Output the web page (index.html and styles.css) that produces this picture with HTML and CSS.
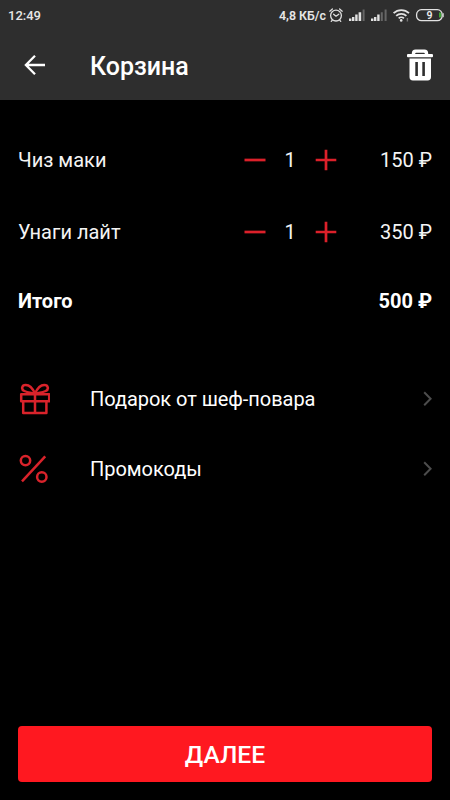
FILE: index.html
```html
<!DOCTYPE html>
<html lang="ru">
<head>
<meta charset="utf-8">
<title>Корзина</title>
<link rel="stylesheet" href="styles.css">
</head>
<body>
<div class="app">
  <div class="status">
    <span class="clock">12:49</span>
    <span class="speed">4,8 КБ/с</span>
    <svg class="status-icons" width="124" height="30" viewBox="326 0 124 30">
      <g fill="none" stroke="#dedede" stroke-width="1.3" stroke-linecap="round" stroke-linejoin="round">
        <circle cx="336" cy="15.6" r="5.4"/>
        <path d="M333.6 14.2l2.4 2 2.8-2M329.8 11.2l2.6-2.2M342.2 11.2l-2.6-2.2M332.3 20.2l-1 1.2M339.7 20.2l1 1.2"/>
      </g>
      <g fill="#e2e2e2">
        <path d="M349 18.6h2.4V21H349zM352 17h2.4v4H352zM355.200 14.6h2.4V21h-2.4zM358.600 12.200h2.600V21h-2.600z"/>
        <path d="M371 18.6h2.4V21H371zM374 17h2.4v4H374zM377.2 14.6h2.4V21h-2.4z"/>
      </g>
      <path fill="#666" d="M362.600 9.400h2V21h-2zM380.800 12.200h2V21h-2zM384.600 9.400h2V21h-2z"/>
      <g fill="none" stroke="#e2e2e2" stroke-width="1.8">
        <path d="M393.600 13.200a11 11 0 0 1 15.400 0M396.200 15.900a7.200 7.200 0 0 1 10.200 0M398.700 18.400a3.700 3.700 0 0 1 5.200 0"/>
      </g>
      <circle cx="401.2" cy="20.4" r="1.3" fill="#e2e2e2"/>
      <path d="M407.4 18v3.5" stroke="#777" stroke-width="1.4"/>
      <path d="M439 12.4h2q1.400 2.600 0 5.200h-2z" fill="#3fa535"/>
      <rect x="416.6" y="9.700" width="25.6" height="11" rx="4.8" fill="none" stroke="#e2e2e2" stroke-width="1.3"/>
      <path d="M443.3 13.2v4" stroke="#cfcfcf"/>
      <text class="battery-level" x="429.4" y="19" text-anchor="middle">9</text>
    </svg>
  </div>
  <header class="header">
    <svg class="back" width="24" height="24" viewBox="0 0 24 24"><path d="M22 12H3.2M12 2.8L2.9 12l9.1 9.2" fill="none" stroke="#fff" stroke-width="2.3"/></svg>
    <h1 class="title">Корзина</h1>
    <svg class="trash" width="28" height="34" viewBox="406 48 28 34">
      <path fill="#fff" fill-rule="evenodd" d="M411.8 54v-.6a3.8 3.8 0 0 1 3.8-3.8h8.8a3.8 3.8 0 0 1 3.8 3.8v.6h3.800q1 0 1 1v1.300q0 1-1 1h-24q-1 0-1-1V55q0-1 1-1zM415.2 54h9.6v-.2q0-1-1-1h-7.6q-1 0-1 1z"/>
      <path fill="#fff" fill-rule="evenodd" d="M409.500 58.500h21.500V77.100q0 3.400-3.400 3.400h-14.700q-3.400 0-3.400-3.400zM415.300 62v14h2.600V62zM422.300 62v14h2.600V62z"/>
    </svg>
  </header>
  <main class="main">
    <div class="item">
      <span class="name">Чиз маки</span>
      <svg class="step" width="22" height="22" viewBox="0 0 22 22"><path d="M.5 11h21"/></svg>
      <span class="qty">1</span>
      <svg class="step" width="22" height="22" viewBox="0 0 22 22"><path d="M.7 11h20.600M11 .7v20.600"/></svg>
      <span class="price">150 ₽</span>
    </div>
    <div class="item">
      <span class="name">Унаги лайт</span>
      <svg class="step" width="22" height="22" viewBox="0 0 22 22"><path d="M.5 11h21"/></svg>
      <span class="qty">1</span>
      <svg class="step" width="22" height="22" viewBox="0 0 22 22"><path d="M.7 11h20.600M11 .7v20.600"/></svg>
      <span class="price">350 ₽</span>
    </div>
    <div class="total"><span>Итого</span><span>500 ₽</span></div>
    <div class="links">
      <div class="link">
        <svg class="link-icon" width="32" height="34" viewBox="18 382 32 34"><path d="M21.200 394.300h28v6.900h-28zM23.200 401.200v11.900h23.200v-11.900M35 394.300v18.800M35 393.600c-2-4.500-5.200-8.600-9.200-8.600-4.300 0-4.800 4.400-1.500 6 3 1.500 6.700 1.700 10.700 2.600 4-.9 7.700-1.100 10.700-2.600 3.300-1.600 2.800-6-1.500-6-4 0-7.200 4.100-9.200 8.600z"/></svg>
        <span class="label">Подарок от шеф-повара</span>
        <svg class="chevron" width="10" height="16" viewBox="0 0 10 16"><path d="M2.200 1.200L8.600 7.700l-6.400 6.500"/></svg>
      </div>
      <div class="link">
        <svg class="link-icon" width="32" height="34" viewBox="18 452 32 34"><circle cx="25.500" cy="460.600" r="4.700"/><circle cx="41.800" cy="477" r="4.700"/><path d="M45.200 456.300L22 481.300"/></svg>
        <span class="label">Промокоды</span>
        <svg class="chevron" width="10" height="16" viewBox="0 0 10 16"><path d="M2.200 1.200L8.600 7.700l-6.400 6.500"/></svg>
      </div>
    </div>
  </main>
  <button class="next">ДАЛЕЕ</button>
</div>
</body>
</html>
```
FILE: styles.css
```css
* { box-sizing: border-box; }
body { margin: 0; background: #000; color: #fff; font-family: Roboto, "Liberation Sans", sans-serif; }
.app { width: 450px; height: 800px; display: flex; flex-direction: column; background: #000; }
svg { display: block; flex: none; }
.status { height: 30px; display: flex; align-items: center; padding-left: 8px; background: #2e2e2e; color: #e6e6e6; font-size: 13px; font-weight: 500; }
.speed { margin-left: auto; font-size: 12.400px; font-weight: 600; white-space: nowrap; }
.battery-level { font-size: 10.500px; font-weight: 600; fill: #eee; }
.header { height: 70px; display: flex; align-items: center; padding: 0 16px 0 23px; background: #2e2e2e; }
.title { margin: 3px 0 0 43px; font-size: 25px; font-weight: 500; line-height: 30px; flex: 1; }
.trash { align-self: flex-start; margin-top: 18px; }
.main { flex: 1; padding: 24px 18px 0; }
.item { height: 72px; display: grid; grid-template-columns: 226px 22px 49px 22px 1fr; align-items: center; font-size: 20px; color: #f4f4f4; }
.step { fill: none; stroke: #dc202a; stroke-width: 2.700; }
.qty { text-align: center; padding-right: 1px; }
.price { text-align: right; }
.total { height: 64px; padding-top: 1px; display: flex; justify-content: space-between; align-items: center; font-size: 20px; font-weight: 700; }
.links { margin-top: 32px; }
.link { height: 70px; display: flex; align-items: center; font-size: 20px; }
.link-icon { fill: none; stroke: #d9232b; stroke-width: 2.500; stroke-linejoin: round; }
.label { margin-left: 40px; flex: 1; letter-spacing: -.04px; }
.chevron { fill: none; stroke: #4c4c4c; stroke-width: 2; }
.next { margin: 0 18px 18px; height: 56px; padding: 1px 0 0; border: 0; border-radius: 4px; background: #ff1820; color: #fff; font: 500 24.600px Roboto, "Liberation Sans", sans-serif; }
```
